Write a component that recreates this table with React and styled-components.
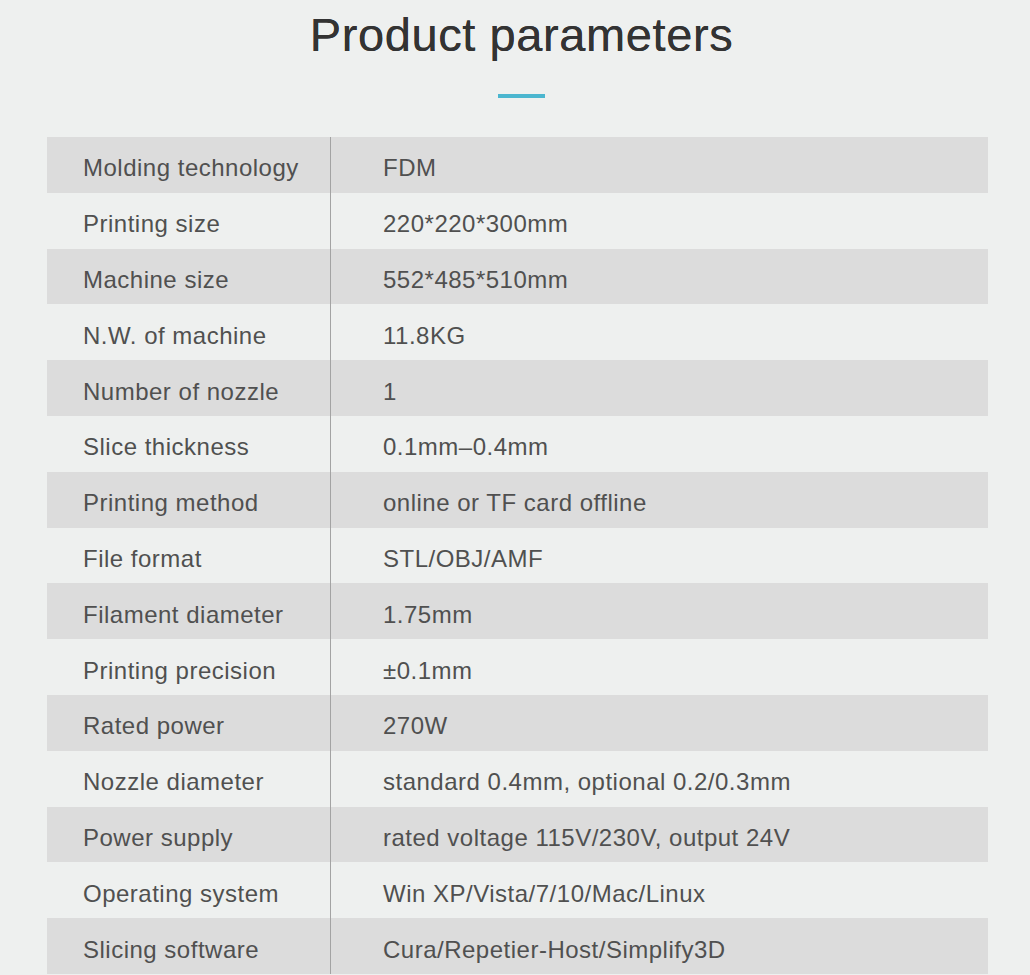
import React from "react";
import styled, { createGlobalStyle } from "styled-components";

const rows = [
  ["Molding technology", "FDM"],
  ["Printing size", "220*220*300mm"],
  ["Machine size", "552*485*510mm"],
  ["N.W. of machine", "11.8KG"],
  ["Number of nozzle", "1"],
  ["Slice thickness", "0.1mm–0.4mm"],
  ["Printing method", "online or TF card offline"],
  ["File format", "STL/OBJ/AMF"],
  ["Filament diameter", "1.75mm"],
  ["Printing precision", "±0.1mm"],
  ["Rated power", "270W"],
  ["Nozzle diameter", "standard 0.4mm, optional 0.2/0.3mm"],
  ["Power supply", "rated voltage 115V/230V, output 24V"],
  ["Operating system", "Win XP/Vista/7/10/Mac/Linux"],
  ["Slicing software", "Cura/Repetier-Host/Simplify3D"],
];

function App() {
  return (
    <>
      <GlobalStyle />
      <Page>
        <Header>
          <Title>Product parameters</Title>
          <Accent />
        </Header>
        <Table>
          {rows.map(([label, value], i) => (
            <Row key={label} shaded={i % 2 === 0}>
              <Label>{label}</Label>
              <Value>{value}</Value>
            </Row>
          ))}
        </Table>
      </Page>
    </>
  );
}

const GlobalStyle = createGlobalStyle`
  html, body {
    margin: 0;
    padding: 0;
    background-color: #eef0ef;
  }
  body {
    font-family: "Liberation Sans", Arial, sans-serif;
  }
`;

const Page = styled.div`
  width: 1030px;
  height: 975px;
  overflow: hidden;
  display: flex;
  flex-direction: column;
`;

const Header = styled.div`
  display: flex;
  flex-direction: column;
  align-items: center;
  padding-left: 13px;
`;

const Title = styled.h1`
  margin: 0;
  padding-top: 11px;
  font-size: 47px;
  line-height: 47px;
  font-weight: 400;
  letter-spacing: 0.6px;
  color: #333333;
  text-shadow: 0 0 0.6px #333;
`;

const Accent = styled.div`
  width: 47px;
  height: 4px;
  margin-top: 36px;
  background-color: #4bb6cf;
`;

const Table = styled.div`
  margin-top: 39px;
  margin-left: 47px;
  width: 941px;
  display: flex;
  flex-direction: column;
`;

const Row = styled.div`
  display: grid;
  grid-template-columns: 284px 1fr;
  height: 55.8px;
  background-color: ${(p) => (p.shaded ? "#dcdcdc" : "transparent")};
`;

const Cell = styled.div`
  display: flex;
  align-items: center;
  padding-top: 7px;
  font-size: 24px;
  letter-spacing: 0.5px;
  color: #505050;
  white-space: nowrap;
`;

const Label = styled(Cell)`
  padding-left: 36px;
  border-right: 1px solid #a3a3a3;
`;

const Value = styled(Cell)`
  padding-left: 52px;
`;

export default App;
